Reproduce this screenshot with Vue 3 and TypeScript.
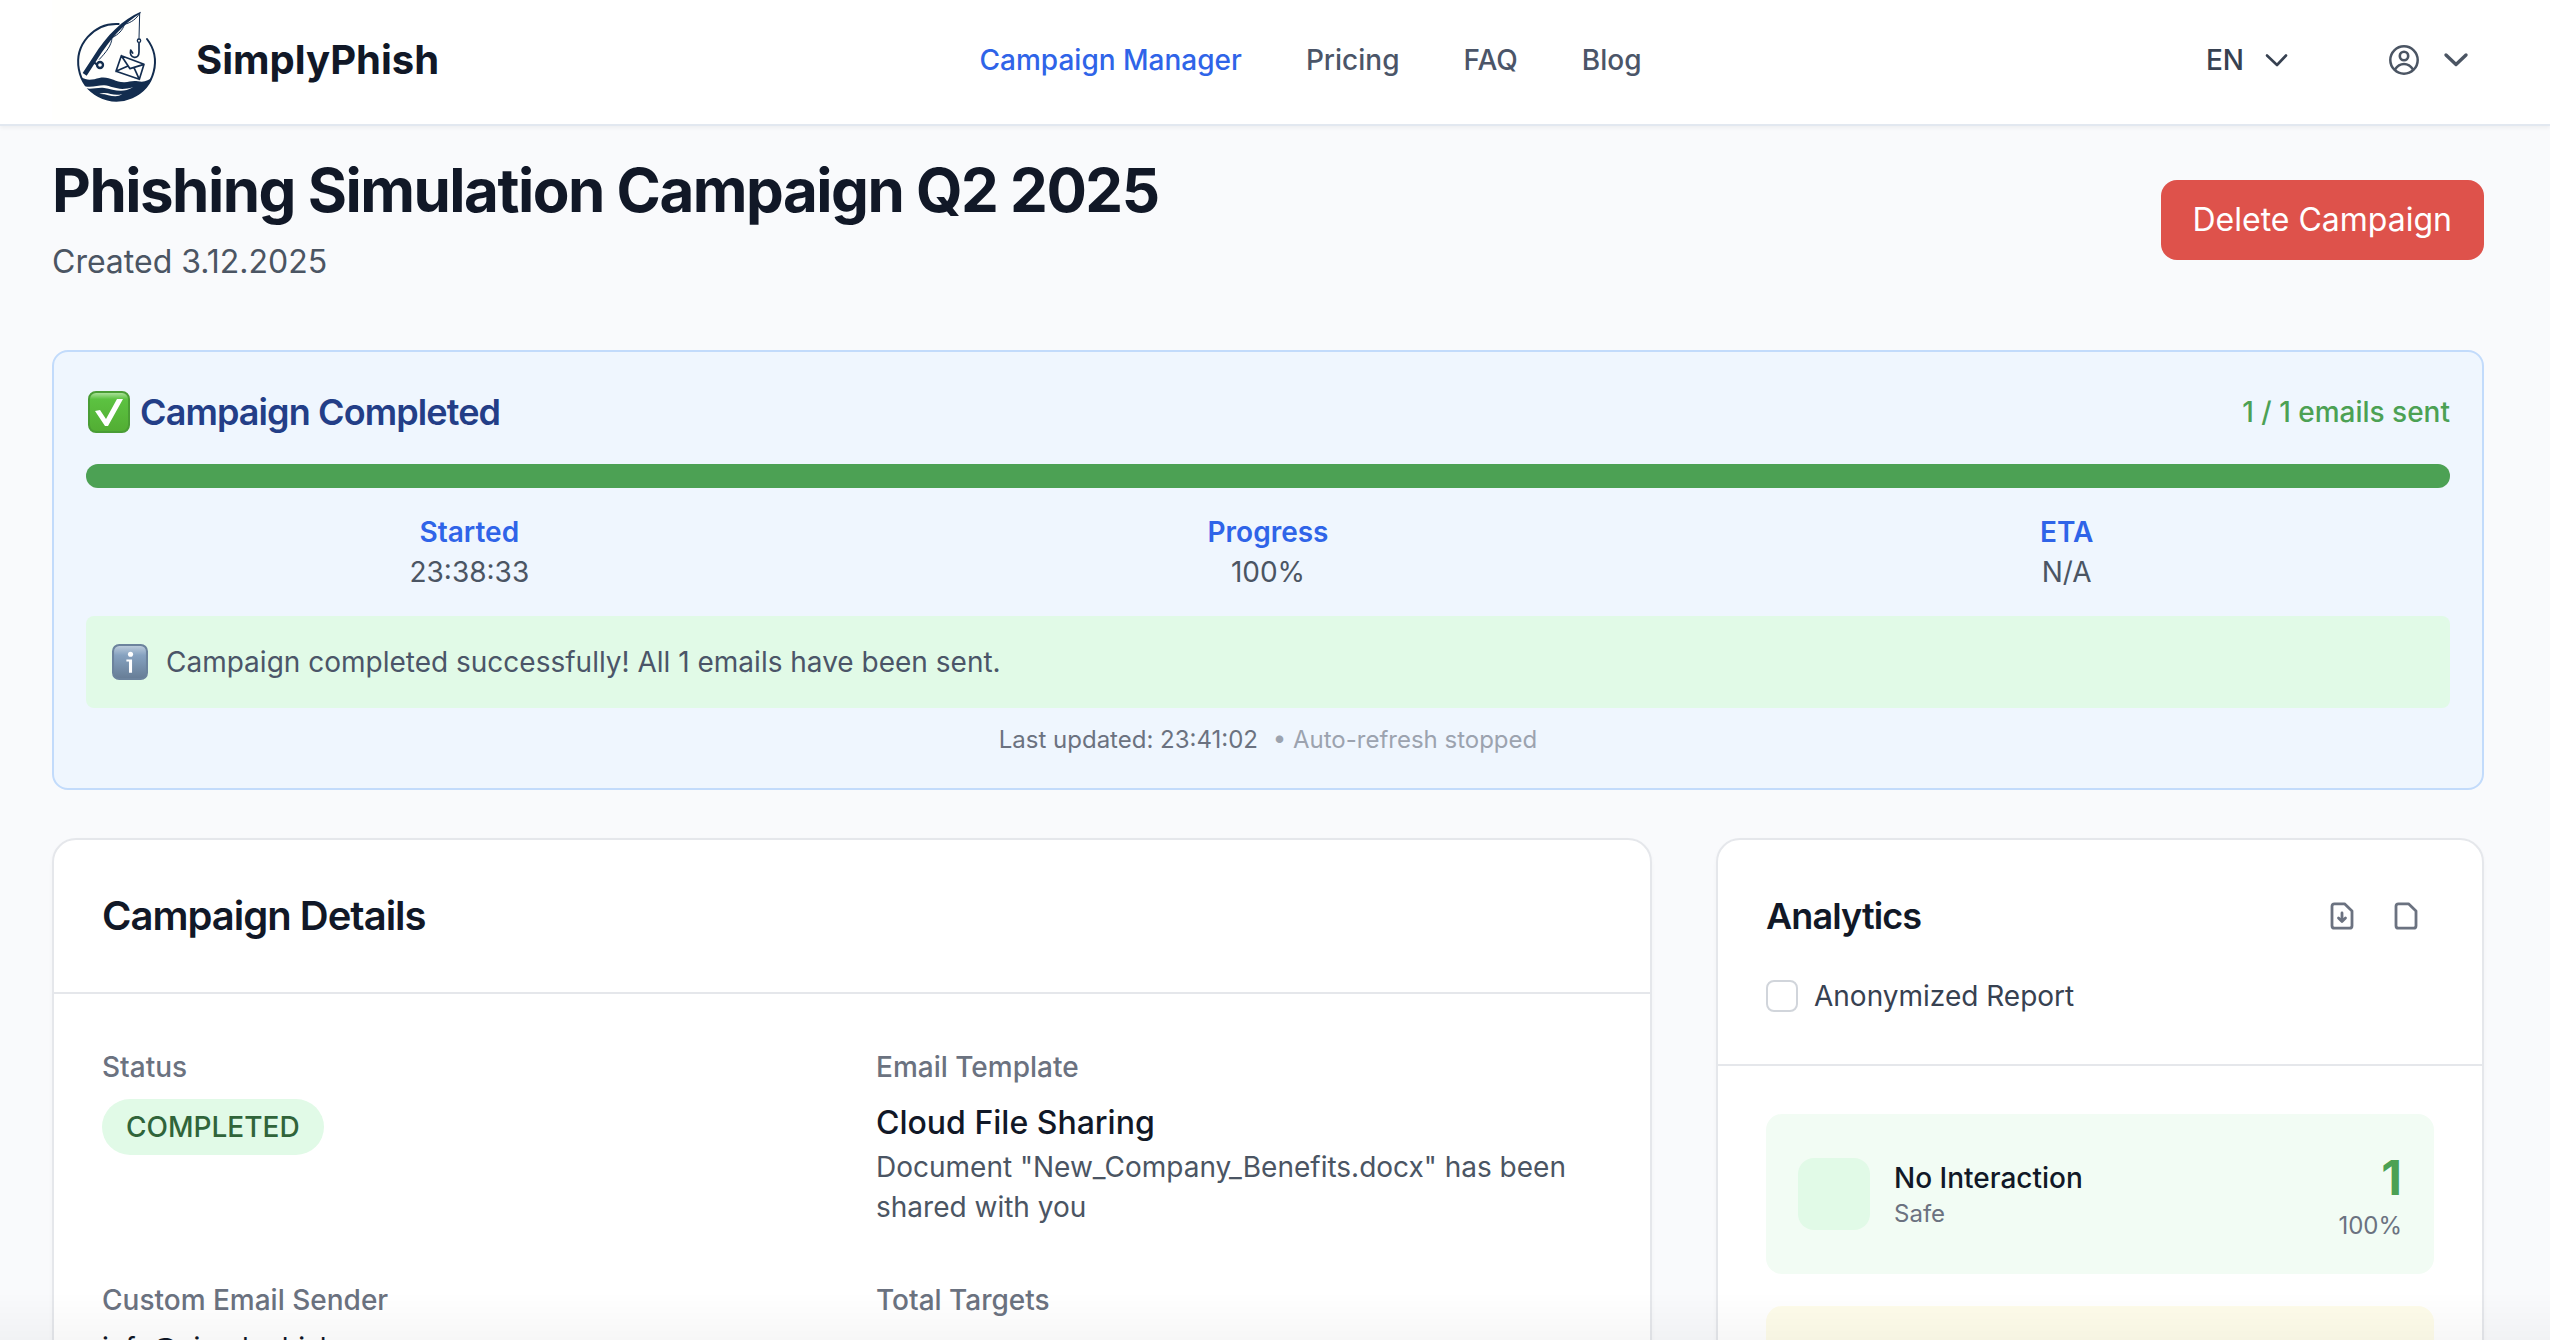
<script setup lang="ts">
import { ref } from 'vue'

interface NavLink {
  label: string
  active: boolean
}

interface Stat {
  label: string
  value: string
}

const navLinks: NavLink[] = [
  { label: 'Campaign Manager', active: true },
  { label: 'Pricing', active: false },
  { label: 'FAQ', active: false },
  { label: 'Blog', active: false },
]

const stats: Stat[] = [
  { label: 'Started', value: '23:38:33' },
  { label: 'Progress', value: '100%' },
  { label: 'ETA', value: 'N/A' },
]

const progress = ref(100)
const anonymized = ref(false)
</script>

<template>
  <div class="page">
    <header class="topbar">
      <a class="brand" href="#">
        <svg class="brand-logo" viewBox="-54 -12 384 360" aria-hidden="true">
          <g fill="none" stroke="#132d4f" stroke-linecap="round" stroke-linejoin="round">
            <path d="M146 60A115 115 0 1 0 231 105" stroke-width="6" />
            <path d="M209 28L207 104" stroke-width="3" />
            <circle cx="207" cy="110" r="5" stroke-width="4" />
            <path d="M207 117V144C207 156 201 161 193 160C184 159 179 151 182 138L188 147" stroke-width="5" />
            <path d="M209 28C199 45 184 56 163 61C159 78 145 92 126 101C125 124 108 145 88 166" stroke-width="3" />
            <circle cx="90" cy="183" r="9" stroke-width="7" />
            <path d="M80 181L68 172" stroke-width="6" />
            <path d="M154 155L222 181L208 226L138 202ZM154 155L180 194L222 181M138 202L174 186M208 226L192 191" stroke-width="5" />
          </g>
          <path d="M212 23C158 47 112 91 70 158L38 207L50 215L82 166C118 109 158 61 212 27Z" fill="#132d4f" />
          <path d="M33 220C54 232 70 226 88 222C120 216 134 236 164 235C178 234 187 229 204 232C224 236 236 229 247 220A116 116 0 0 1 33 220Z" fill="#132d4f" />
          <g fill="#fffffd">
            <path d="M34 243C58 255 83 243 103 244C129 247 146 263 190 249C155 271 130 255 103 252C82 248 61 260 38 250Z" />
            <path d="M88 270C116 260 126 279 157 270C135 286 113 268 88 270Z" />
          </g>
        </svg>
        <span class="brand-name">SimplyPhish</span>
      </a>
      <nav class="nav">
        <a
          v-for="link in navLinks"
          :key="link.label"
          href="#"
          class="nav-link"
          :class="{ active: link.active }"
        >{{ link.label }}</a>
      </nav>
      <div class="tools">
        <button type="button" class="lang-button">
          EN
          <svg class="icon" viewBox="0 0 32 32" aria-hidden="true">
            <path d="M7 11.500L17 21L26 11.500" stroke-width="2.600" />
          </svg>
        </button>
        <button type="button" class="user-button" aria-label="Account">
          <svg class="icon" viewBox="0 0 32 32" aria-hidden="true">
            <circle cx="16" cy="16" r="13.700" stroke-width="2.500" />
            <circle cx="16" cy="12" r="4.200" stroke-width="2.600" />
            <path d="M7 25.500C9.500 21.500 12.500 20 16 20C19.500 20 22.500 21.500 25 25.500" stroke-width="2.500" />
          </svg>
          <svg class="icon" viewBox="0 0 32 32" aria-hidden="true">
            <path d="M6 11L16 20.500L26 11" stroke-width="3.400" />
          </svg>
        </button>
      </div>
    </header>

    <main class="content">
      <div class="title-row">
        <div>
          <h1 class="title">Phishing Simulation Campaign Q2 2025</h1>
          <p class="created">Created 3.12.2025</p>
        </div>
        <button type="button" class="delete-button">Delete Campaign</button>
      </div>

      <section class="progress-card">
        <div class="progress-head">
          <h2 class="progress-title">
            <svg class="check-icon" viewBox="0 0 42 42" aria-hidden="true">
              <defs>
                <linearGradient id="check-fill" x1="0" y1="0" x2="0" y2="1">
                  <stop offset="0" stop-color="#b5e5a6" />
                  <stop offset="0.180" stop-color="#5cc241" />
                  <stop offset="1" stop-color="#52ad33" />
                </linearGradient>
              </defs>
              <rect x="1" y="1" width="40" height="40" rx="7" fill="url(#check-fill)" stroke="#4a9d35" stroke-width="2" />
              <path d="M7 20L12 19L18 28L29 8H35L20 35H17Z" fill="#fff" />
            </svg>
            Campaign Completed
          </h2>
          <span class="sent">1 / 1 emails sent</span>
        </div>
        <div class="track" role="progressbar" :aria-valuenow="progress">
          <div class="fill" :style="{ width: progress + '%' }"></div>
        </div>
        <dl class="stats">
          <div v-for="stat in stats" :key="stat.label">
            <dt>{{ stat.label }}</dt>
            <dd>{{ stat.value }}</dd>
          </div>
        </dl>
        <div class="notice">
          <svg class="info-icon" viewBox="0 0 35 35" aria-hidden="true">
            <defs>
              <linearGradient id="info-fill" x1="0" y1="0" x2="0" y2="1">
                <stop offset="0" stop-color="#c0cfde" />
                <stop offset="0.300" stop-color="#86a2c0" />
                <stop offset="1" stop-color="#667c95" />
              </linearGradient>
            </defs>
            <rect x="1" y="1" width="33" height="33" rx="6" fill="url(#info-fill)" stroke="#6c839d" stroke-width="2" />
            <circle cx="18" cy="10" r="2.500" fill="#fff" />
            <path d="M14 15H19.500V28H16.500V17H14Z" fill="#fff" />
          </svg>
          <span>Campaign completed successfully! All 1 emails have been sent.</span>
        </div>
        <p class="updated">
          Last updated: 23:41:02 <span class="stopped">• Auto-refresh stopped</span>
        </p>
      </section>

      <div class="columns">
        <section class="card details">
          <div class="card-head">
            <h2 class="card-title">Campaign Details</h2>
          </div>
          <dl class="detail-grid">
            <div>
              <dt><span>Status</span></dt>
              <dd><span class="badge">COMPLETED</span></dd>
            </div>
            <div>
              <dt><span>Email Template</span></dt>
              <dd class="strong">Cloud File Sharing</dd>
              <dd class="subject">Document "New_Company_Benefits.docx" has been shared with you</dd>
            </div>
            <div>
              <dt><span>Custom Email Sender</span></dt>
              <dd class="sender">info@simplyphish.com</dd>
            </div>
            <div>
              <dt><span>Total Targets</span></dt>
            </div>
          </dl>
        </section>

        <section class="card analytics">
          <div class="card-head">
            <div class="analytics-row">
              <h2 class="analytics-title">Analytics</h2>
              <div class="exports">
                <button type="button" class="export-button" aria-label="Download report">
                  <svg class="icon" viewBox="0 0 32 32" aria-hidden="true">
                    <path d="M18.500 3.800H8.500Q6 3.800 6 6.300V25.700Q6 28.200 8.500 28.200H23.500Q26 28.200 26 25.700V11ZM16 13V21.500M12.500 18L16 21.500L19.500 18" stroke-width="2.800" />
                  </svg>
                </button>
                <button type="button" class="export-button" aria-label="Open report">
                  <svg class="icon" viewBox="0 0 32 32" aria-hidden="true">
                    <path d="M18.500 3.800H8.500Q6 3.800 6 6.300V25.700Q6 28.200 8.500 28.200H23.500Q26 28.200 26 25.700V11Z" stroke-width="2.800" />
                  </svg>
                </button>
              </div>
            </div>
            <label class="anonymized">
              <input v-model="anonymized" type="checkbox" />
              Anonymized Report
            </label>
          </div>
          <div class="tiles">
            <div class="tile safe">
              <div class="tile-icon"></div>
              <div class="tile-text">
                <p class="tile-name">No Interaction</p>
                <p class="tile-note">Safe</p>
              </div>
              <div class="tile-figures">
                <p class="tile-count">1</p>
                <p class="tile-note">100%</p>
              </div>
            </div>
            <div class="tile opened"></div>
          </div>
        </section>
      </div>
    </main>
    <div class="bottom-fade"></div>
  </div>
</template>

<style>
body {
  background: #f9fafc;
}
</style>

<style scoped>
.page {
  height: 100vh;
  overflow: hidden;
  background: #f9fafc;
  color: #111827;
  font-family: Inter, "Liberation Sans", sans-serif;
  font-size: 32px;
  line-height: 48px;
}

.page * {
  box-sizing: border-box;
}

h1,
h2,
p,
dl,
dd {
  margin: 0;
}

h1,
h2 {
  letter-spacing: -0.025em;
}

button {
  font: inherit;
  color: inherit;
  border: 0;
  background: none;
  cursor: pointer;
}

a {
  color: inherit;
  text-decoration: none;
}

.icon {
  width: 32px;
  height: 32px;
  fill: none;
  stroke: currentColor;
  stroke-linecap: round;
  stroke-linejoin: round;
}

.topbar {
  display: flex;
  align-items: center;
  justify-content: space-between;
  padding: 0 66px 4px 52px;
  background: #fff;
  border-bottom: 2px solid #e2e8f0;
  box-shadow: 0 2px 4px rgba(0, 0, 0, 0.05);
}

.brand {
  display: flex;
  align-items: center;
  gap: 16px;
}

.brand-logo {
  width: 128px;
  height: 120px;
  background: #fffffd;
}

.brand-name {
  font-size: 40px;
  line-height: 56px;
  font-weight: 700;
}

.nav {
  display: flex;
  gap: 64px;
  font-size: 28px;
  line-height: 40px;
  font-weight: 500;
  color: #4b5568;
}

.nav-link.active {
  color: #2f64e8;
}

.tools {
  display: flex;
  align-items: center;
  gap: 60px;
}

.lang-button {
  display: flex;
  align-items: center;
  gap: 16px;
  padding: 12px 24px;
  font-size: 28px;
  line-height: 40px;
  font-weight: 500;
  color: #374151;
}

.user-button {
  display: flex;
  align-items: center;
  gap: 20px;
  padding: 12px;
  color: #4b5563;
}

.content {
  padding: 28px 66px 48px 52px;
}

.title-row {
  display: flex;
  align-items: center;
  justify-content: space-between;
  margin-bottom: 64px;
}

.title {
  margin-bottom: 12px;
  font-size: 60px;
  line-height: 72px;
  font-weight: 700;
}

.created {
  color: #4b5563;
}

.delete-button {
  padding: 16px 32px;
  border-radius: 16px;
  background: #de524b;
  color: #fff;
}

.progress-card {
  margin-bottom: 48px;
  padding: 32px;
  border: 2px solid #c2dbfb;
  border-radius: 16px;
  background: #eff6fe;
}

.progress-head {
  display: flex;
  align-items: center;
  justify-content: space-between;
  margin-bottom: 24px;
}

.progress-title {
  display: flex;
  align-items: center;
  gap: 10px;
  padding-left: 2px;
  font-size: 36px;
  line-height: 56px;
  font-weight: 600;
  color: #233e87;
}

.check-icon {
  width: 42px;
  height: 42px;
}

.sent {
  font-size: 28px;
  line-height: 40px;
  font-weight: 500;
  color: #4ca154;
}

.track {
  height: 24px;
  margin-bottom: 24px;
  border-radius: 12px;
  background: #e5e7eb;
}

.fill {
  height: 100%;
  border-radius: 12px;
  background: #4ca154;
}

.stats {
  display: grid;
  grid-template-columns: repeat(3, 1fr);
  gap: 32px;
  margin-bottom: 24px;
  font-size: 28px;
  line-height: 40px;
  text-align: center;
  color: #4b5563;
}

.stats dt {
  font-weight: 600;
  color: #2f64e8;
}

.notice {
  display: flex;
  align-items: center;
  gap: 18px;
  min-height: 92px;
  padding: 24px 26px;
  margin-bottom: 16px;
  border-radius: 8px;
  background: #e1fae7;
  font-size: 28px;
  line-height: 40px;
  color: #4b5568;
}

.info-icon {
  width: 36px;
  height: 36px;
}

.updated {
  font-size: 24px;
  line-height: 32px;
  text-align: center;
  color: #6b7280;
}

.stopped {
  margin-left: 8px;
  color: #9ca3af;
}

.columns {
  display: grid;
  grid-template-columns: repeat(3, 1fr);
  gap: 64px;
  align-items: start;
}

.card {
  border: 2px solid #e5e7eb;
  border-radius: 24px;
  background: #fff;
  box-shadow: 0 2px 4px rgba(0, 0, 0, 0.03);
}

.details {
  grid-column: span 2;
}

.card-head {
  padding: 48px;
  border-bottom: 2px solid #e5e7eb;
}

.card-title {
  font-size: 40px;
  line-height: 56px;
  font-weight: 600;
}

.detail-grid {
  display: grid;
  grid-template-columns: repeat(2, 1fr);
  gap: 48px;
  padding: 48px;
}

.detail-grid dt span {
  font-size: 28px;
  font-weight: 500;
  color: #6b7280;
}

.badge {
  display: block;
  width: fit-content;
  margin-top: 8px;
  padding: 8px 24px;
  border-radius: 28px;
  background: #e1fae7;
  font-size: 28px;
  line-height: 40px;
  font-weight: 500;
  color: #30643a;
}

.strong {
  margin-top: 8px;
  font-weight: 500;
}

.subject {
  font-size: 28px;
  line-height: 40px;
  color: #4b5563;
}

.sender {
  margin-top: 4px;
  font-size: 28px;
  line-height: 40px;
}

.analytics-row {
  display: flex;
  align-items: center;
  justify-content: space-between;
  margin-bottom: 32px;
}

.analytics-title {
  font-size: 36px;
  line-height: 56px;
  font-weight: 600;
}

.exports {
  display: flex;
  gap: 8px;
  color: #6b7280;
}

.export-button {
  display: flex;
  padding: 12px;
}

.anonymized {
  display: flex;
  align-items: center;
  gap: 16px;
  width: fit-content;
  font-size: 28px;
  line-height: 40px;
  color: #374151;
}

.anonymized input {
  appearance: none;
  width: 32px;
  height: 32px;
  margin: 0;
  border: 2px solid #d1d5db;
  border-radius: 8px;
  background: #fff;
}

.anonymized input:checked {
  background: #2f64e8;
}

.tiles {
  display: flex;
  flex-direction: column;
  gap: 32px;
  padding: 48px;
}

.tile {
  display: flex;
  align-items: center;
  gap: 24px;
  min-height: 160px;
  padding: 32px;
  border-radius: 16px;
}

.tile.safe {
  background: #f2fcf4;
}

.tile.opened {
  background: #fefcea;
}

.tile-icon {
  width: 72px;
  height: 72px;
  border-radius: 16px;
  background: #e1fae7;
}

.tile-name {
  font-size: 28px;
  line-height: 40px;
  font-weight: 500;
}

.tile-note {
  font-size: 24px;
  line-height: 32px;
  color: #6b7280;
}

.tile-figures {
  margin-left: auto;
  text-align: right;
}

.tile-count {
  font-size: 48px;
  line-height: 64px;
  font-weight: 700;
  color: #4ca154;
}

.bottom-fade {
  position: fixed;
  right: 0;
  bottom: 0;
  left: 0;
  height: 48px;
  background: linear-gradient(rgba(0, 0, 0, 0), rgba(0, 0, 0, 0.03));
  pointer-events: none;
}
</style>
